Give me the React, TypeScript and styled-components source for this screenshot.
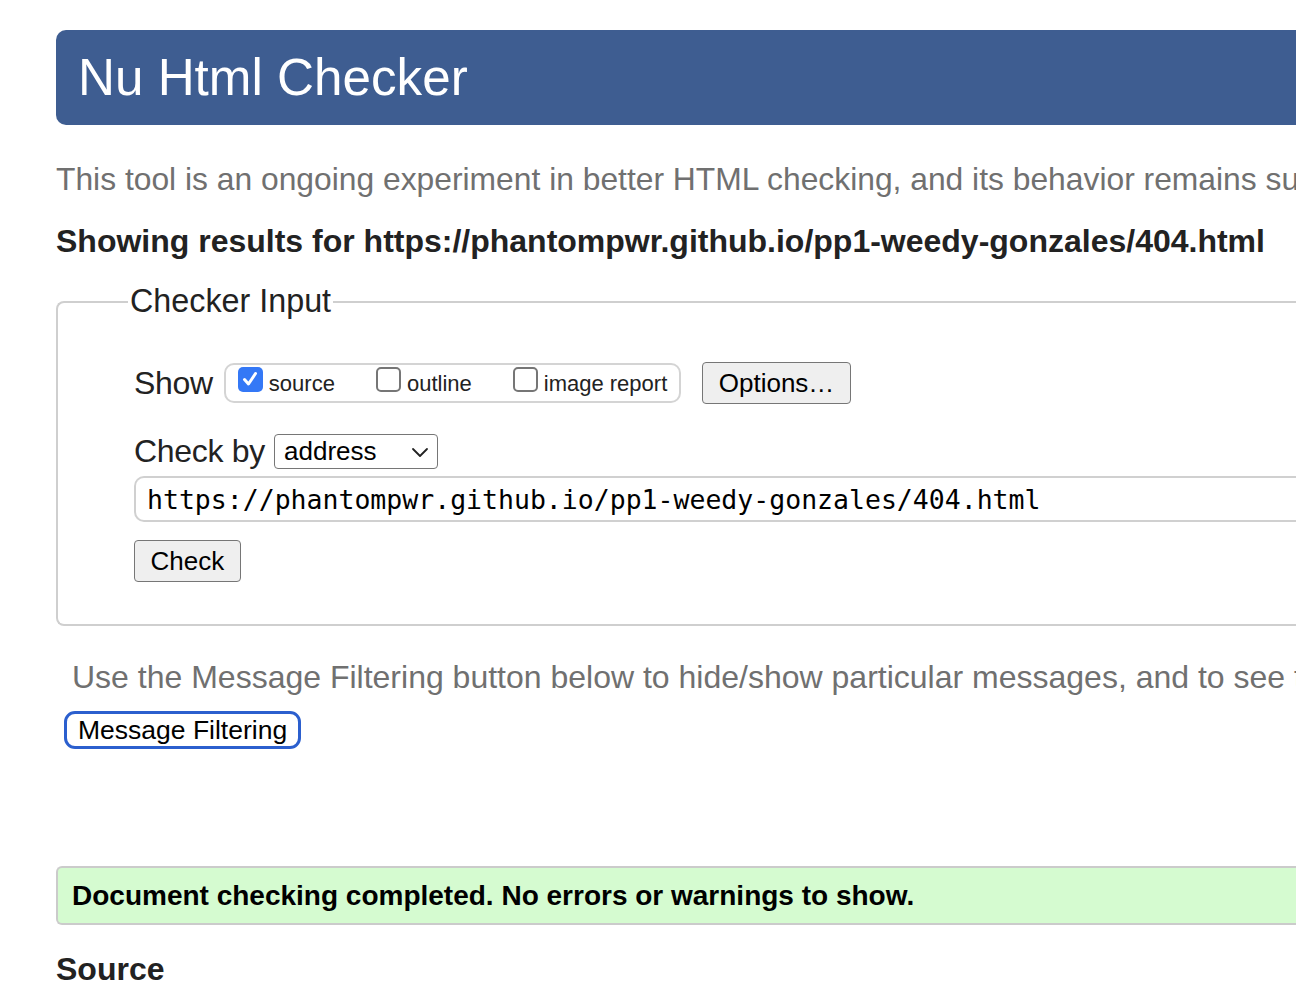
import React from 'react';
import styled, { createGlobalStyle } from 'styled-components';

const Global = createGlobalStyle`
  html, body {
    margin: 0;
    padding: 0;
    background: #fff;
    overflow: hidden;
  }
  body {
    font-family: "Liberation Sans", Arial, Helvetica, sans-serif;
    color: #222;
  }
`;

const Page = styled.div`
  width: 1800px;
  padding: 30px 0 0 56px;
  box-sizing: border-box;
`;

const Header = styled.h1`
  margin: 0;
  height: 95px;
  display: flex;
  align-items: center;
  padding-left: 22px;
  background: #3e5d91;
  border-radius: 10px 0 0 10px;
  color: #fff;
  font-weight: 400;
  font-size: 51.2px;
`;

const Intro = styled.p`
  margin: 34px 0 0;
  font-size: 31.8px;
  line-height: 40px;
  color: #707070;
  white-space: nowrap;
`;

const Results = styled.h2`
  margin: 22px 0 0;
  font-size: 32px;
  line-height: 40px;
  font-weight: 700;
  color: #222;
  white-space: nowrap;
`;

const Fieldset = styled.fieldset`
  margin: 22px 0 0;
  padding: 42px 0 42px 76px;
  border: 2px solid #cfcfcf;
  border-right: none;
  border-radius: 8px 0 0 8px;
  min-width: 0;
`;

const Legend = styled.legend`
  margin-left: -6px;
  padding: 0 2px;
  font-size: 32.3px;
  color: #222;
`;

const Row = styled.div<{ gap?: number }>`
  display: flex;
  align-items: center;
  gap: ${(p) => p.gap ?? 10}px;
`;

const Label = styled.span`
  font-size: 32px;
  color: #222;
  letter-spacing: -0.3px;
`;

const Group = styled.div`
  display: flex;
  align-items: center;
  height: 36px;
  padding: 0 12px;
  border: 2px solid #d4d4d4;
  border-radius: 10px;
  gap: 41px;
`;

const Option = styled.label`
  display: flex;
  align-items: center;
  gap: 6px;
  font-size: 22px;
  color: #222;
  position: relative;
  top: 1px;
`;

const Box = styled.span<{ checked?: boolean }>`
  width: 25px;
  height: 25px;
  box-sizing: border-box;
  border-radius: 5px;
  display: inline-flex;
  align-items: center;
  justify-content: center;
  background: ${(p) => (p.checked ? '#3478f6' : '#fff')};
  border: ${(p) => (p.checked ? 'none' : '2px solid #767676')};
  position: relative;
  top: -5px;
`;

const Button = styled.button`
  font-family: "Liberation Sans", Arial, sans-serif;
  font-size: 26px;
  color: #000;
  background: #efefef;
  border: 1.5px solid #767676;
  border-radius: 4px;
  padding: 0 15.5px;
  height: 42px;
  cursor: pointer;
`;

const Select = styled.div`
  width: 164px;
  height: 35px;
  box-sizing: border-box;
  border: 1.5px solid #767676;
  border-radius: 4px;
  display: flex;
  align-items: center;
  justify-content: space-between;
  padding: 0 8px 0 9px;
  font-size: 26px;
  color: #000;
`;

const UrlInput = styled.div`
  margin-top: 6px;
  height: 46px;
  box-sizing: border-box;
  border: 2px solid #d0d0d0;
  border-right: none;
  border-radius: 10px 0 0 10px;
  display: flex;
  align-items: center;
  padding-left: 11px;
  font-family: "DejaVu Sans Mono", "Liberation Mono", monospace;
  font-size: 26.5px;
  color: #000;
  white-space: nowrap;
`;

const CheckButton = styled(Button)`
  margin-top: 18px;
`;

const FilterNote = styled.p`
  margin: 31px 0 0 16px;
  font-size: 32px;
  line-height: 40px;
  color: #707070;
  white-space: nowrap;
`;

const FilterButton = styled.button`
  margin: 14px 0 0 8px;
  font-family: "Liberation Sans", Arial, sans-serif;
  font-size: 26.5px;
  color: #000;
  background: #fff;
  border: 3px solid #2b5fce;
  border-radius: 11px;
  height: 38px;
  padding: 0 11px;
`;

const Success = styled.div`
  margin-top: 117px;
  height: 59px;
  box-sizing: border-box;
  border: 2px solid #cbcbcb;
  border-right: none;
  border-radius: 6px 0 0 6px;
  background: #d5fbd0;
  display: flex;
  align-items: center;
  padding-left: 14px;
  font-weight: 700;
  font-size: 28px;
  color: #000;
`;

const SourceHeading = styled.h2`
  margin: 24px 0 0;
  font-size: 32px;
  line-height: 40px;
  font-weight: 700;
  color: #222;
`;

const Checkbox = ({ checked, label }: { checked?: boolean; label: string }) => (
  <Option>
    <Box checked={checked}>
      {checked && (
        <svg width="18" height="18" viewBox="0 0 18 18">
          <path d="M3.5 9.5 L7.5 14 L14.5 3.5" fill="none" stroke="#fff" strokeWidth="3" strokeLinecap="round" strokeLinejoin="round" />
        </svg>
      )}
    </Box>
    {label}
  </Option>
);

const Chevron = () => (
  <svg width="18" height="12" viewBox="0 0 18 12">
    <path d="M2 3 L9 10 L16 3" fill="none" stroke="#222" strokeWidth="1.8" strokeLinecap="round" strokeLinejoin="round" />
  </svg>
);

export default function App() {
  return (
    <>
      <Global />
      <Page>
        <Header>Nu Html Checker</Header>
        <Intro>
          This tool is an ongoing experiment in better HTML checking, and its behavior remains subject to change
        </Intro>
        <Results>Showing results for https://phantompwr.github.io/pp1-weedy-gonzales/404.html</Results>
        <Fieldset>
          <Legend>Checker Input</Legend>
          <Row gap={11}>
            <Label>Show</Label>
            <Group>
              <Checkbox checked label="source" />
              <Checkbox label="outline" />
              <Checkbox label="image report" />
            </Group>
            <Button style={{ marginLeft: 10 }}>Options…</Button>
          </Row>
          <Row gap={9} style={{ marginTop: 29 }}>
            <Label>Check by</Label>
            <Select>
              address
              <Chevron />
            </Select>
          </Row>
          <UrlInput>https://phantompwr.github.io/pp1-weedy-gonzales/404.html</UrlInput>
          <CheckButton>Check</CheckButton>
        </Fieldset>
        <FilterNote>
          Use the Message Filtering button below to hide/show particular messages, and to see total counts of errors and warnings.
        </FilterNote>
        <FilterButton>Message Filtering</FilterButton>
        <Success>Document checking completed. No errors or warnings to show.</Success>
        <SourceHeading>Source</SourceHeading>
      </Page>
    </>
  );
}
